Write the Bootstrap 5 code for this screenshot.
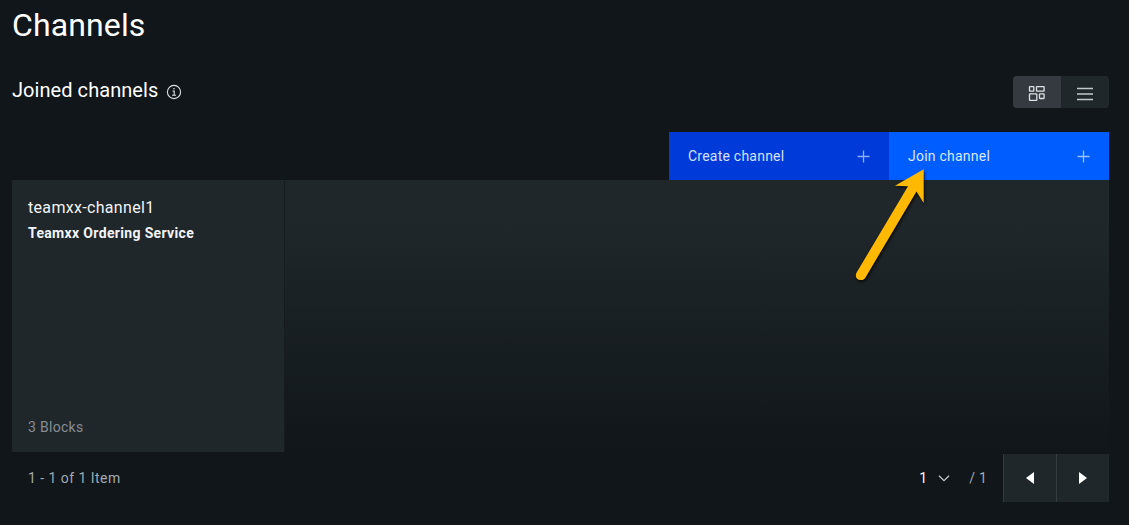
<!DOCTYPE html>
<html lang="en" data-bs-theme="dark">
<head>
<meta charset="utf-8">
<meta name="viewport" content="width=device-width, initial-scale=1">
<title>Channels</title>
<link href="https://cdn.jsdelivr.net/npm/bootstrap@5.3.0/dist/css/bootstrap.min.css" rel="stylesheet">
<style>
body{background:#101619;color:#f2f4f8;font-family:Roboto,"Noto Sans",sans-serif;font-size:14px;line-height:18px;height:525px;overflow:hidden}
.page{padding:5px 20px 0 12px}
h1{font-size:32px;line-height:40px;font-weight:400;letter-spacing:.12px}
h2{font-size:20px;line-height:26px;font-weight:400;letter-spacing:.06px}
.heading-row{height:32px;margin-top:31px}
.heading-label{padding-bottom:5px}
.info{margin:4px 0 0 8px}
.view-switch .btn{width:48px;height:32px;background:#20272a;color:#c1c7cd;border:0;border-radius:4px;margin-left:0!important}
.view-switch .btn.active{background:#343a3f;color:#dde1e6}
.view-switch svg{margin-top:4px}
.action{width:220px;height:48px;border:0;border-radius:0;padding:0 19px;font-size:14px;color:#dfe9ff;letter-spacing:.23px}
.action-create,.action-create:hover{background:#003bd9;color:#d5e0ff}
.action-join,.action-join:hover{background:#005dff;color:#d9e8ff}
.tiles{height:272px;background:linear-gradient(#20272a 15%,#101619)}
.tile{width:273px;background:#20272a;border:0;border-right:1px solid #151b1e;border-radius:0;padding:18px 16px 16px}
.tile-name{font-size:16px;line-height:20px;letter-spacing:.32px}
.tile-service{font-weight:700;line-height:18px;margin-top:6px;letter-spacing:.34px}
.tile-blocks{color:#878d96;letter-spacing:.3px}
.pager{height:48px;margin-top:2px;color:#a2a9b0;letter-spacing:.2px}
.item-range{letter-spacing:.46px}
.chev{margin:0 19px 0 11px}
.page-total{margin-right:16px}
.pager .btn{width:53px;height:48px;background:#20272a;color:#fff;border:0;border-left:1px solid #343a3f;border-radius:0}
.pager .btn svg{margin:-1px 1px 0 0}
.pager .btn:last-child svg{margin-right:0}
.pointer{left:845px;top:155px}
.pointer path{filter:drop-shadow(1px 2px 1.5px rgba(0,0,0,.7))}
</style>
</head>
<body>
<main class="page">
  <h1 class="m-0">Channels</h1>
  <div class="heading-row d-flex justify-content-between">
    <div class="heading-label d-flex align-items-center">
      <h2 class="m-0">Joined channels</h2>
      <svg class="info" width="16" height="16" viewBox="0 0 16 16" fill="none" stroke="#dde1e6" stroke-width="1.1"><circle cx="8" cy="8" r="6.6"/><path d="M6.5 7h1.7v4M6 11.3h4"/><circle cx="8" cy="4.8" r=".8" fill="#dde1e6" stroke="none"/></svg>
    </div>
    <div class="btn-group view-switch" role="group" aria-label="View">
      <button class="btn active p-0 d-flex align-items-center justify-content-center" aria-label="Tiles"><svg width="18" height="18" viewBox="0 0 18 18" fill="none" stroke="currentColor" stroke-width="1.3"><rect x="1.5" y="1.6" width="4.3" height="4.6" rx=".5"/><rect x="8.5" y="1.6" width="7.6" height="4.6" rx=".5"/><rect x="1.5" y="8.8" width="7.3" height="6.6" rx=".5"/><rect x="11.5" y="8.8" width="4.6" height="4.7" rx=".5"/></svg></button>
      <button class="btn p-0 d-flex align-items-center justify-content-center" aria-label="List"><svg width="16" height="16" viewBox="0 0 16 16" stroke="currentColor" stroke-width="1.3"><path d="M0 2.5h16M0 8h16M0 13.5h16"/></svg></button>
    </div>
  </div>
  <div class="d-flex justify-content-end mt-4">
    <button class="btn action action-create d-flex align-items-center justify-content-between">Create channel<svg width="13" height="13" viewBox="0 0 13 13" stroke="#8caeff" stroke-width="1.3"><path d="M6.5 .5v12M.5 6.5h12"/></svg></button>
    <button class="btn action action-join d-flex align-items-center justify-content-between">Join channel<svg width="13" height="13" viewBox="0 0 13 13" stroke="#99c2ff" stroke-width="1.3"><path d="M6.5 .5v12M.5 6.5h12"/></svg></button>
  </div>
  <div class="tiles d-flex">
    <article class="card tile">
      <div class="tile-name">teamxx-channel1</div>
      <div class="tile-service">Teamxx Ordering Service</div>
      <div class="tile-blocks mt-auto">3 Blocks</div>
    </article>
  </div>
  <div class="pager d-flex align-items-center">
    <span class="item-range ms-3 me-auto">1 - 1 of 1 Item</span>
    <span class="text-light">1</span>
    <svg class="chev" width="12" height="12" viewBox="0 0 12 12" fill="none" stroke="#c1c7cd" stroke-width="1.3"><path d="M1 3.7l5 5 5-5"/></svg>
    <span class="page-total">/ 1</span>
    <button class="btn p-0" aria-label="Previous page"><svg width="8" height="12" viewBox="0 0 8 12" fill="currentColor"><path d="M8 0v12L0 6z"/></svg></button>
    <button class="btn p-0" aria-label="Next page"><svg width="8" height="12" viewBox="0 0 8 12" fill="currentColor"><path d="M0 0v12l8-6z"/></svg></button>
  </div>
</main>
<svg class="pointer position-absolute pe-none" width="95" height="135" viewBox="845 155 95 135"><path d="M923.7 169.3L895 185.7 908 186.2 856.8 272.3C852.8 279 862.5 283 865.5 277.4L916.5 191.5 923.7 203z" fill="#ffb900"/></svg>
<script src="https://cdn.jsdelivr.net/npm/bootstrap@5.3.0/dist/js/bootstrap.bundle.min.js"></script>
</body>
</html>
